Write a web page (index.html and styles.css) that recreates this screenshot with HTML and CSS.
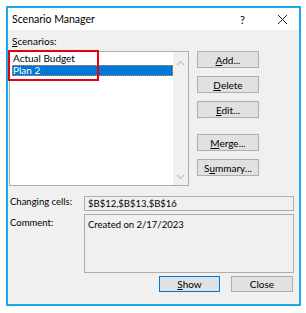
FILE: index.html
```html
<!DOCTYPE html>
<html lang="en">
<head>
  <meta charset="UTF-8">
  <title>Scenario Manager</title>
  <link rel="stylesheet" href="styles.css">
</head>
<body>
  <!-- Dialog -->
  <div class="dialog">
    <div class="titlebar">
      <span class="title">Scenario Manager</span>
      <span class="help">?</span>
      <svg class="close-x" width="11" height="11" viewBox="0 0 11 11">
        <path d="M1 1 L10 10 M10 1 L1 10" stroke="#222" stroke-width="1" fill="none"/>
      </svg>
    </div>

    <div class="dialog-body">
      <div class="label scen-label"><u>S</u>cenarios:</div>

      <div class="top-row">
        <div class="listbox">
          <ul class="items">
            <li>Actual Budget</li>
            <li class="selected">Plan 2</li>
          </ul>
          <div class="scrollbar">
            <svg width="9" height="6" viewBox="0 0 9 6"><path d="M1 5 L4.5 1.5 L8 5" stroke="#c2c2c2" stroke-width="1.2" fill="none"/></svg>
            <svg width="9" height="6" viewBox="0 0 9 6"><path d="M1 1 L4.5 4.5 L8 1" stroke="#c2c2c2" stroke-width="1.2" fill="none"/></svg>
          </div>
          <div class="highlight"></div>
        </div>

        <div class="side-buttons">
          <button class="btn"><u>A</u>dd...</button>
          <button class="btn"><u>D</u>elete</button>
          <button class="btn"><u>E</u>dit...</button>
          <button class="btn spaced"><u>M</u>erge...</button>
          <button class="btn">S<u>u</u>mmary...</button>
        </div>
      </div>

      <div class="field-row">
        <div class="label">Changing cells:</div>
        <div class="field">$B$12,$B$13,$B$16</div>
      </div>
      <div class="field-row comment-row">
        <div class="label">Comment:</div>
        <div class="field comment">Created on 2/17/2023</div>
      </div>

      <div class="footer">
        <button class="btn default"><u>S</u>how</button>
        <button class="btn wide">Close</button>
      </div>
    </div>
  </div>
</body>
</html>
```

FILE: styles.css
```css
/* Reset */
* {
  margin: 0;
  padding: 0;
  box-sizing: border-box;
}
body {
  font-family: Lato, "Noto Sans", sans-serif;
  font-size: 10px;
  color: #000;
  background-color: #fff;
}

/* Dialog frame */
.dialog {
  margin: 6px;
  width: 295px;
  height: 300px;
  border: 2px solid #17ace8;
  background-color: #f0f0f0;
  display: flex;
  flex-direction: column;
}
.titlebar {
  height: 22px;
  background-color: #fff;
  display: flex;
  align-items: center;
  padding-left: 4px;
}
.titlebar .title {
  font-size: 10.5px;
  flex: 1;
}
.titlebar .help {
  font-size: 11px;
  margin-right: 32px;
}
.titlebar .close-x {
  margin-right: 11px;
}

/* Body */
.dialog-body {
  padding: 5px 5px 0 1px;
  display: flex;
  flex-direction: column;
}
.label {
  line-height: 12px;
  padding-left: 3px;
}
.scen-label {
  margin-bottom: 4px;
}
.top-row {
  display: flex;
  gap: 8px;
}

/* List box */
.listbox {
  position: relative;
  width: 180px;
  height: 135px;
  border: 1px solid #adadad;
  background-color: #fff;
  display: flex;
}
.listbox .items {
  list-style: none;
  flex: 1;
  padding: 1px 0 0 2px;
}
.listbox li {
  height: 11px;
  line-height: 11px;
  padding-left: 1px;
}
.listbox li.selected {
  background-color: #0078d7;
  color: #fff;
  outline: 1px dotted #d98a3c;
  outline-offset: -1px;
  margin-top: 1px;
}
.scrollbar {
  width: 15px;
  background-color: #f0f0f0;
  display: flex;
  flex-direction: column;
  justify-content: space-between;
  align-items: center;
  padding: 8px 0 5px;
}
.highlight {
  position: absolute;
  left: -2px;
  top: -2px;
  width: 91px;
  height: 31px;
  border: 2px solid #e8000c;
}

/* Buttons */
.side-buttons {
  display: flex;
  flex-direction: column;
  gap: 8px;
}
.btn {
  font-family: inherit;
  font-size: 10px;
  width: 62px;
  height: 17px;
  background-color: #e1e1e1;
  border: 1px solid #adadad;
  color: #000;
}
.btn.spaced {
  margin-top: 8px;
}
.btn.default {
  width: 61px;
  height: 16px;
  border-color: #0078d7;
}
.btn.wide {
  height: 16px;
}

/* Fields */
.field-row {
  display: flex;
  margin-top: 10px;
}
.field-row .label {
  width: 75px;
  padding-left: 1px;
  font-size: 9.5px;
}
.field {
  width: 210px;
  height: 15px;
  border: 1px solid #adadad;
  padding-left: 3px;
  line-height: 13px;
  font-size: 9.5px;
}
.comment-row {
  margin-top: 3px;
}
.comment-row .label {
  padding-top: 3px;
}
.field.comment {
  height: 59px;
  padding-top: 3px;
}

/* Footer */
.footer {
  display: flex;
  justify-content: flex-end;
  gap: 11px;
  margin-top: 3px;
  padding-right: 1px;
}
```
